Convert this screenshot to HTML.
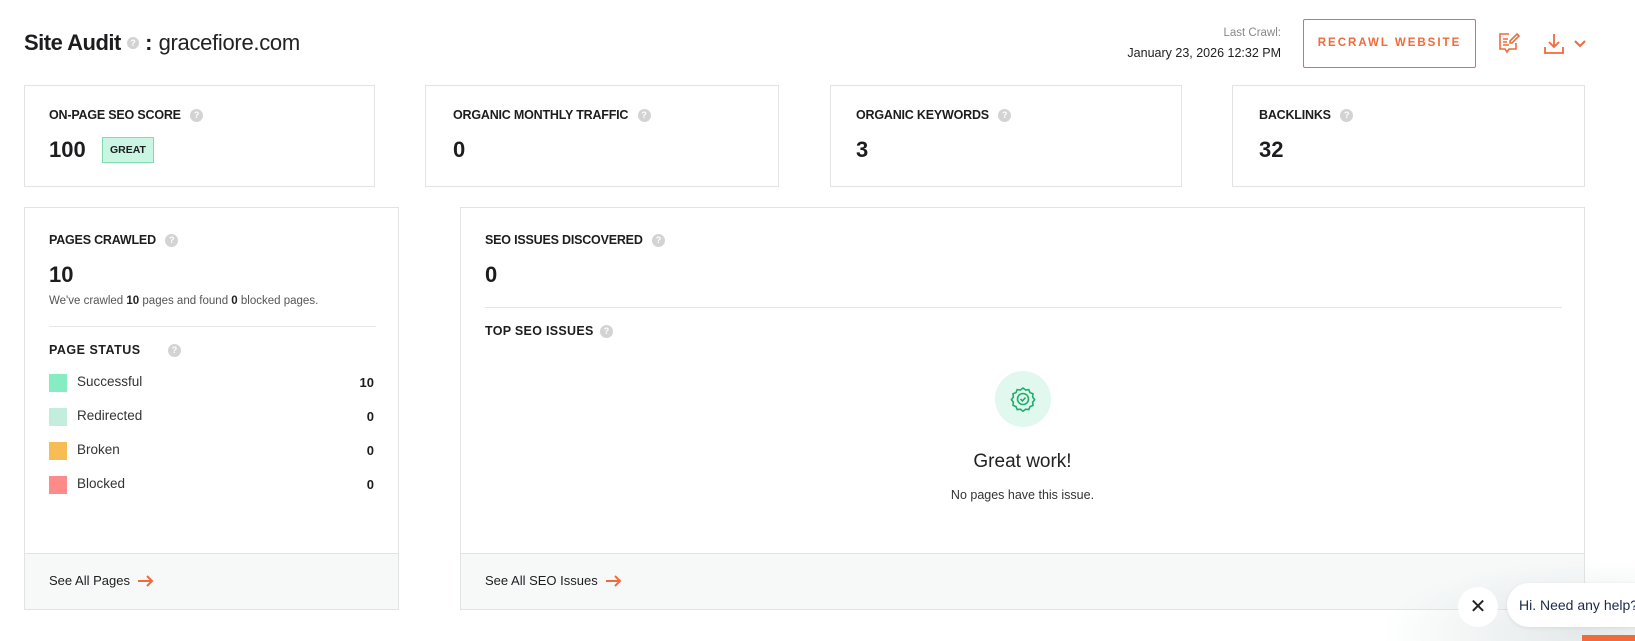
<!DOCTYPE html>
<html><head><meta charset="utf-8"><style>
*{box-sizing:border-box;margin:0;padding:0}
body{width:1635px;height:641px;background:#fff;font-family:"Liberation Sans",sans-serif;color:#1d1d1f;position:relative;overflow:hidden}
.a{position:absolute;white-space:nowrap}
.card{position:absolute;border:1px solid #e2e4e4;background:#fff}
.lbl{font-size:12.5px;font-weight:bold;letter-spacing:-0.2px;color:#1d1d1f}
.val{font-size:22px;font-weight:bold}
.q{display:inline-block;width:13px;height:13px;border-radius:50%;background:#d3d3d3;color:#fff;font-size:9px;line-height:13px;text-align:center;font-weight:bold;vertical-align:middle}
.foot{position:absolute;left:0;right:0;bottom:0;height:56px;background:#f7f9f9;border-top:1px solid #e2e4e4}
.sq{position:absolute;width:18px;height:18px}
.row{font-size:13.5px;color:#333}
.num{font-size:13px;font-weight:bold}
.arr{vertical-align:middle;margin-left:8px;margin-top:-2px}
</style></head><body>
<div class="a" style="left:24px;top:30px;font-size:22px"><b style="letter-spacing:-0.5px">Site Audit</b> <span class="q" style="width:12px;height:12px;line-height:12px;margin-top:-3px">?</span> <b>:</b> <span style="letter-spacing:-0.3px;font-weight:normal;color:#222">gracefiore.com</span></div>
<div class="a" style="right:354px;top:27px;font-size:11.5px;color:#888;text-align:right">Last Crawl:</div>
<div class="a" style="right:354px;top:46px;font-size:12.5px;color:#222;text-align:right">January 23, 2026 12:32 PM</div>
<div class="a" style="left:1303px;top:19px;width:173px;height:49px;border:1.5px solid #f06a3b;border-radius:2px;color:#f06a3b;font-size:11.5px;font-weight:bold;letter-spacing:2px;text-align:center;line-height:46px">RECRAWL WEBSITE</div>
<svg class="a" style="left:1498px;top:32px" width="22" height="24" viewBox="0 0 22 24" fill="none" stroke="#f06a3b" stroke-width="1.6"><path d="M11 2H2v15h5l2 3 2-3h7v-6"/><path d="M5 7h5M5 10h4M5 13h6"/><path d="M19 2l2 2-7 7h-2V9z"/></svg>
<svg class="a" style="left:1542px;top:32px" width="24" height="24" viewBox="0 0 24 24" fill="none" stroke="#f06a3b" stroke-width="1.8"><path d="M12 2v13M7 10l5 5 5-5M3 15v6h18v-6"/></svg>
<svg class="a" style="left:1574px;top:40px" width="12" height="8" viewBox="0 0 12 8" fill="none" stroke="#f06a3b" stroke-width="2"><path d="M1 1l5 5 5-5"/></svg>

<div class="card" style="left:24px;top:85px;width:351px;height:102px">
<div class="a lbl" style="left:24px;top:22px">ON-PAGE SEO SCORE <span class="q" style="margin-left:6px">?</span></div>
<div class="a val" style="left:24px;top:51px">100</div>
<div class="a" style="left:77px;top:51px;width:52px;height:26px;background:#c9f5e2;border:1px solid #7fdcb3;font-size:10.5px;font-weight:bold;text-align:center;line-height:24px">GREAT</div>
</div>
<div class="card" style="left:425px;top:85px;width:354px;height:102px">
<div class="a lbl" style="left:27px;top:22px">ORGANIC MONTHLY TRAFFIC <span class="q" style="margin-left:6px">?</span></div>
<div class="a val" style="left:27px;top:51px">0</div></div>
<div class="card" style="left:830px;top:85px;width:352px;height:102px">
<div class="a lbl" style="left:25px;top:22px">ORGANIC KEYWORDS <span class="q" style="margin-left:6px">?</span></div>
<div class="a val" style="left:25px;top:51px">3</div></div>
<div class="card" style="left:1232px;top:85px;width:353px;height:102px">
<div class="a lbl" style="left:26px;top:22px">BACKLINKS <span class="q" style="margin-left:6px">?</span></div>
<div class="a val" style="left:26px;top:51px">32</div></div>

<div class="card" style="left:24px;top:207px;width:375px;height:403px">
<div class="a lbl" style="left:24px;top:25px">PAGES CRAWLED <span class="q" style="margin-left:6px">?</span></div>
<div class="a val" style="left:24px;top:54px">10</div>
<div class="a" style="left:24px;top:87px;font-size:11.5px;color:#555">We've crawled <b style="color:#222">10</b> pages and found <b style="color:#222">0</b> blocked pages.</div>
<div class="a" style="left:24px;top:118px;width:327px;height:1px;background:#e5e7e7"></div>
<div class="a lbl" style="left:24px;top:135px;letter-spacing:0.5px">PAGE STATUS</div><span class="a q" style="left:143px;top:136px">?</span>
<div class="sq" style="left:24px;top:166px;background:#86ecc2"></div><div class="a row" style="left:52px;top:166px">Successful</div><div class="a num" style="right:24px;top:167px">10</div>
<div class="sq" style="left:24px;top:200px;background:#c3eedb"></div><div class="a row" style="left:52px;top:200px">Redirected</div><div class="a num" style="right:24px;top:201px">0</div>
<div class="sq" style="left:24px;top:234px;background:#f7bd55"></div><div class="a row" style="left:52px;top:234px">Broken</div><div class="a num" style="right:24px;top:235px">0</div>
<div class="sq" style="left:24px;top:268px;background:#ff8a8a"></div><div class="a row" style="left:52px;top:268px">Blocked</div><div class="a num" style="right:24px;top:269px">0</div>
<div class="foot"><div class="a" style="left:24px;top:19px;font-size:13px">See All Pages<svg class="arr" width="16" height="12" viewBox="0 0 16 12" fill="none" stroke="#f06a3b" stroke-width="2"><path d="M0 6h14M9 1l5 5-5 5"/></svg></div></div>
</div>

<div class="card" style="left:460px;top:207px;width:1125px;height:403px">
<div class="a lbl" style="left:24px;top:25px">SEO ISSUES DISCOVERED <span class="q" style="margin-left:6px">?</span></div>
<div class="a val" style="left:24px;top:54px">0</div>
<div class="a" style="left:24px;top:99px;width:1077px;height:1px;background:#e5e7e7"></div>
<div class="a lbl" style="left:24px;top:116px;letter-spacing:0.3px">TOP SEO ISSUES</div><span class="a q" style="left:139px;top:117px">?</span>
<div class="a" style="left:534px;top:163px;width:56px;height:56px;border-radius:50%;background:#e0f8ee"></div>
<svg class="a" style="left:549px;top:178px" width="26" height="26" viewBox="0 0 26 26" fill="none" stroke="#1fae6a" stroke-width="1.6"><path d="M13 2l2.6 2 3.2-.4 1.2 3 3 1.2-.4 3.2 2 2.6-2 2.6.4 3.2-3 1.2-1.2 3-3.2-.4-2.6 2-2.6-2-3.2.4-1.2-3-3-1.2.4-3.2-2-2.6 2-2.6-.4-3.2 3-1.2 1.2-3 3.2.4z"/><circle cx="13" cy="13" r="5.5"/><path d="M10.5 13l2 2 3-3.5"/></svg>
<div class="a" style="left:0;width:1123px;top:243px;text-align:center;font-size:19px;color:#222">Great work!</div>
<div class="a" style="left:0;width:1123px;top:280px;text-align:center;font-size:12.5px;color:#333">No pages have this issue.</div>
<div class="foot"><div class="a" style="left:24px;top:19px;font-size:13px">See All SEO Issues<svg class="arr" width="16" height="12" viewBox="0 0 16 12" fill="none" stroke="#f06a3b" stroke-width="2"><path d="M0 6h14M9 1l5 5-5 5"/></svg></div></div>
</div>

<div class="a" style="left:1380px;top:560px;width:255px;height:81px;background:radial-gradient(ellipse at 80% 90%,rgba(200,210,210,.5),rgba(255,255,255,0) 70%)"></div>
<div class="a" style="left:1458px;top:587px;width:40px;height:40px;border-radius:50%;background:#fff;text-align:center;line-height:40px;font-size:20px;color:#222">✕</div>
<div class="a" style="left:1507px;top:583px;width:150px;height:44px;border-radius:22px;background:#fff;box-shadow:0 1px 4px rgba(0,0,0,.08);font-size:14px;color:#1b2a4a;line-height:44px;padding-left:12px">Hi. Need any help?</div>
<div class="a" style="left:1582px;top:635px;width:53px;height:6px;background:#f06a3b"></div>
</body></html>
